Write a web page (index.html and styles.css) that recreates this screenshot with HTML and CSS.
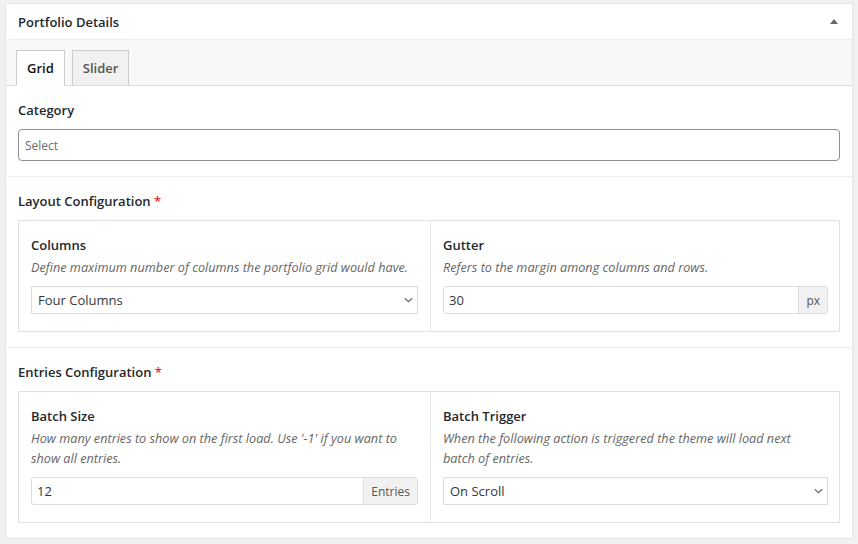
FILE: index.html
```html
<!DOCTYPE html>
<html>
<head>
<meta charset="utf-8">
<link rel="stylesheet" href="styles.css">
</head>
<body>
<div class="panel">
  <div class="panel-head">
    <h2 class="panel-title">Portfolio Details</h2>
    <span class="toggle"></span>
  </div>
  <div class="tabs">
    <div class="tab active">Grid</div>
    <div class="tab">Slider</div>
  </div>
  <div class="section">
    <div class="sec-label">Category</div>
    <div class="text-input placeholder">Select</div>
  </div>
  <div class="section">
    <div class="sec-label">Layout Configuration <span class="req">*</span></div>
    <div class="box">
      <div class="field">
        <div class="f-label">Columns</div>
        <div class="f-desc">Define maximum number of columns the portfolio grid would have.</div>
        <div class="select"><span>Four Columns</span><svg class="chev" width="9" height="6" viewBox="0 0 9 6"><path d="M0.8 1.2l3.7 3.5 3.7-3.5" fill="none" stroke="#6a6a6a" stroke-width="1.2"/></svg></div>
      </div>
      <div class="field">
        <div class="f-label">Gutter</div>
        <div class="f-desc">Refers to the margin among columns and rows.</div>
        <div class="group"><span class="g-val">30</span><span class="addon">px</span></div>
      </div>
    </div>
  </div>
  <div class="section last">
    <div class="sec-label">Entries Configuration <span class="req">*</span></div>
    <div class="box">
      <div class="field">
        <div class="f-label">Batch Size</div>
        <div class="f-desc">How many entries to show on the first load. Use '-1' if you want to show all entries.</div>
        <div class="group"><span class="g-val">12</span><span class="addon">Entries</span></div>
      </div>
      <div class="field">
        <div class="f-label">Batch Trigger</div>
        <div class="f-desc narrow">When the following action is triggered the theme will load next batch of entries.</div>
        <div class="select"><span>On Scroll</span><svg class="chev" width="9" height="6" viewBox="0 0 9 6"><path d="M0.8 1.2l3.7 3.5 3.7-3.5" fill="none" stroke="#6a6a6a" stroke-width="1.2"/></svg></div>
      </div>
    </div>
  </div>
</div>
</body>
</html>
```
FILE: styles.css
```css
* { box-sizing: border-box; }
body {
  margin: 0;
  background: #f1f1f1;
  padding: 3px 5px 0 5px;
  font-family: "Open Sans", "Noto Sans", sans-serif;
  color: #23282d;
  width: 858px;
  height: 544px;
  overflow: hidden;
}
.panel {
  width: 848px;
  background: #fff;
  border: 1px solid #e5e5e5;
  display: flex;
  flex-direction: column;
}
.panel-head {
  height: 36px;
  border-bottom: 1px solid #eee;
  display: flex;
  align-items: center;
  justify-content: space-between;
  padding: 0 14px 0 12px;
}
.panel-title {
  margin: 0;
  font-size: 13px;
  font-weight: 600;
  color: #23282d;
}
.toggle {
  width: 0;
  height: 0;
  border-left: 4px solid transparent;
  border-right: 4px solid transparent;
  border-bottom: 5px solid #666;
}
.tabs {
  height: 46px;
  background: #f8f8f8;
  border-bottom: 1px solid #ddd;
  padding: 10px 0 0 10px;
  display: flex;
  align-items: flex-end;
  gap: 7px;
}
.tab {
  height: 36px;
  padding: 0 10px;
  border: 1px solid #ccc;
  background: #f1f1f1;
  font-size: 13px;
  font-weight: 600;
  color: #555;
  display: flex;
  align-items: center;
  margin-bottom: -1px;
  border-bottom-color: #ddd;
}
.tab.active {
  background: #fff;
  color: #111;
  border-bottom-color: #fff;
}
.section {
  padding: 15px 12px;
  border-bottom: 1px solid #eee;
  display: flex;
  flex-direction: column;
}
.section.last { border-bottom: 0; }
.sec-label {
  font-size: 13px;
  font-weight: 600;
  line-height: 18px;
  margin-bottom: 10px;
}
.req { color: #dc3232; }
.text-input {
  height: 32px;
  border: 1px solid #8c8f94;
  border-radius: 4px;
  padding: 0 6px;
  font-size: 12px;
  display: flex;
  align-items: center;
}
.placeholder { color: #6b6b6b; }
.box {
  border: 1px solid #e2e2e2;
  display: grid;
  grid-template-columns: 411px 1fr;
}
.field {
  padding: 15px 12px 17px 12px;
  display: flex;
  flex-direction: column;
}
.field + .field { border-left: 1px solid #e8e8e8; padding-right: 11px; }
.f-label {
  font-size: 13px;
  font-weight: 600;
  line-height: 18px;
}
.f-desc {
  font-size: 12.7px;
  font-style: italic;
  color: #666;
  line-height: 20px;
  margin-top: 3px;
  margin-bottom: 9px;
}
.f-desc.narrow { padding-right: 20px; }
.select {
  height: 28px;
  border: 1px solid #ddd;
  background: #fff;
  padding: 0 4px 0 6px;
  font-size: 13px;
  color: #32373c;
  display: flex;
  align-items: center;
  justify-content: space-between;
  box-shadow: inset 0 1px 1px rgba(0,0,0,0.03);
}
.group {
  height: 28px;
  border: 1px solid #ddd;
  border-radius: 3px;
  display: flex;
  font-size: 13px;
  color: #32373c;
}
.g-val {
  flex: 1;
  display: flex;
  align-items: center;
  padding-left: 5px;
}
.addon {
  background: #f1f1f1;
  border-left: 1px solid #ddd;
  display: flex;
  align-items: center;
  padding: 0 7px;
  font-size: 12px;
  color: #555;
}
```
